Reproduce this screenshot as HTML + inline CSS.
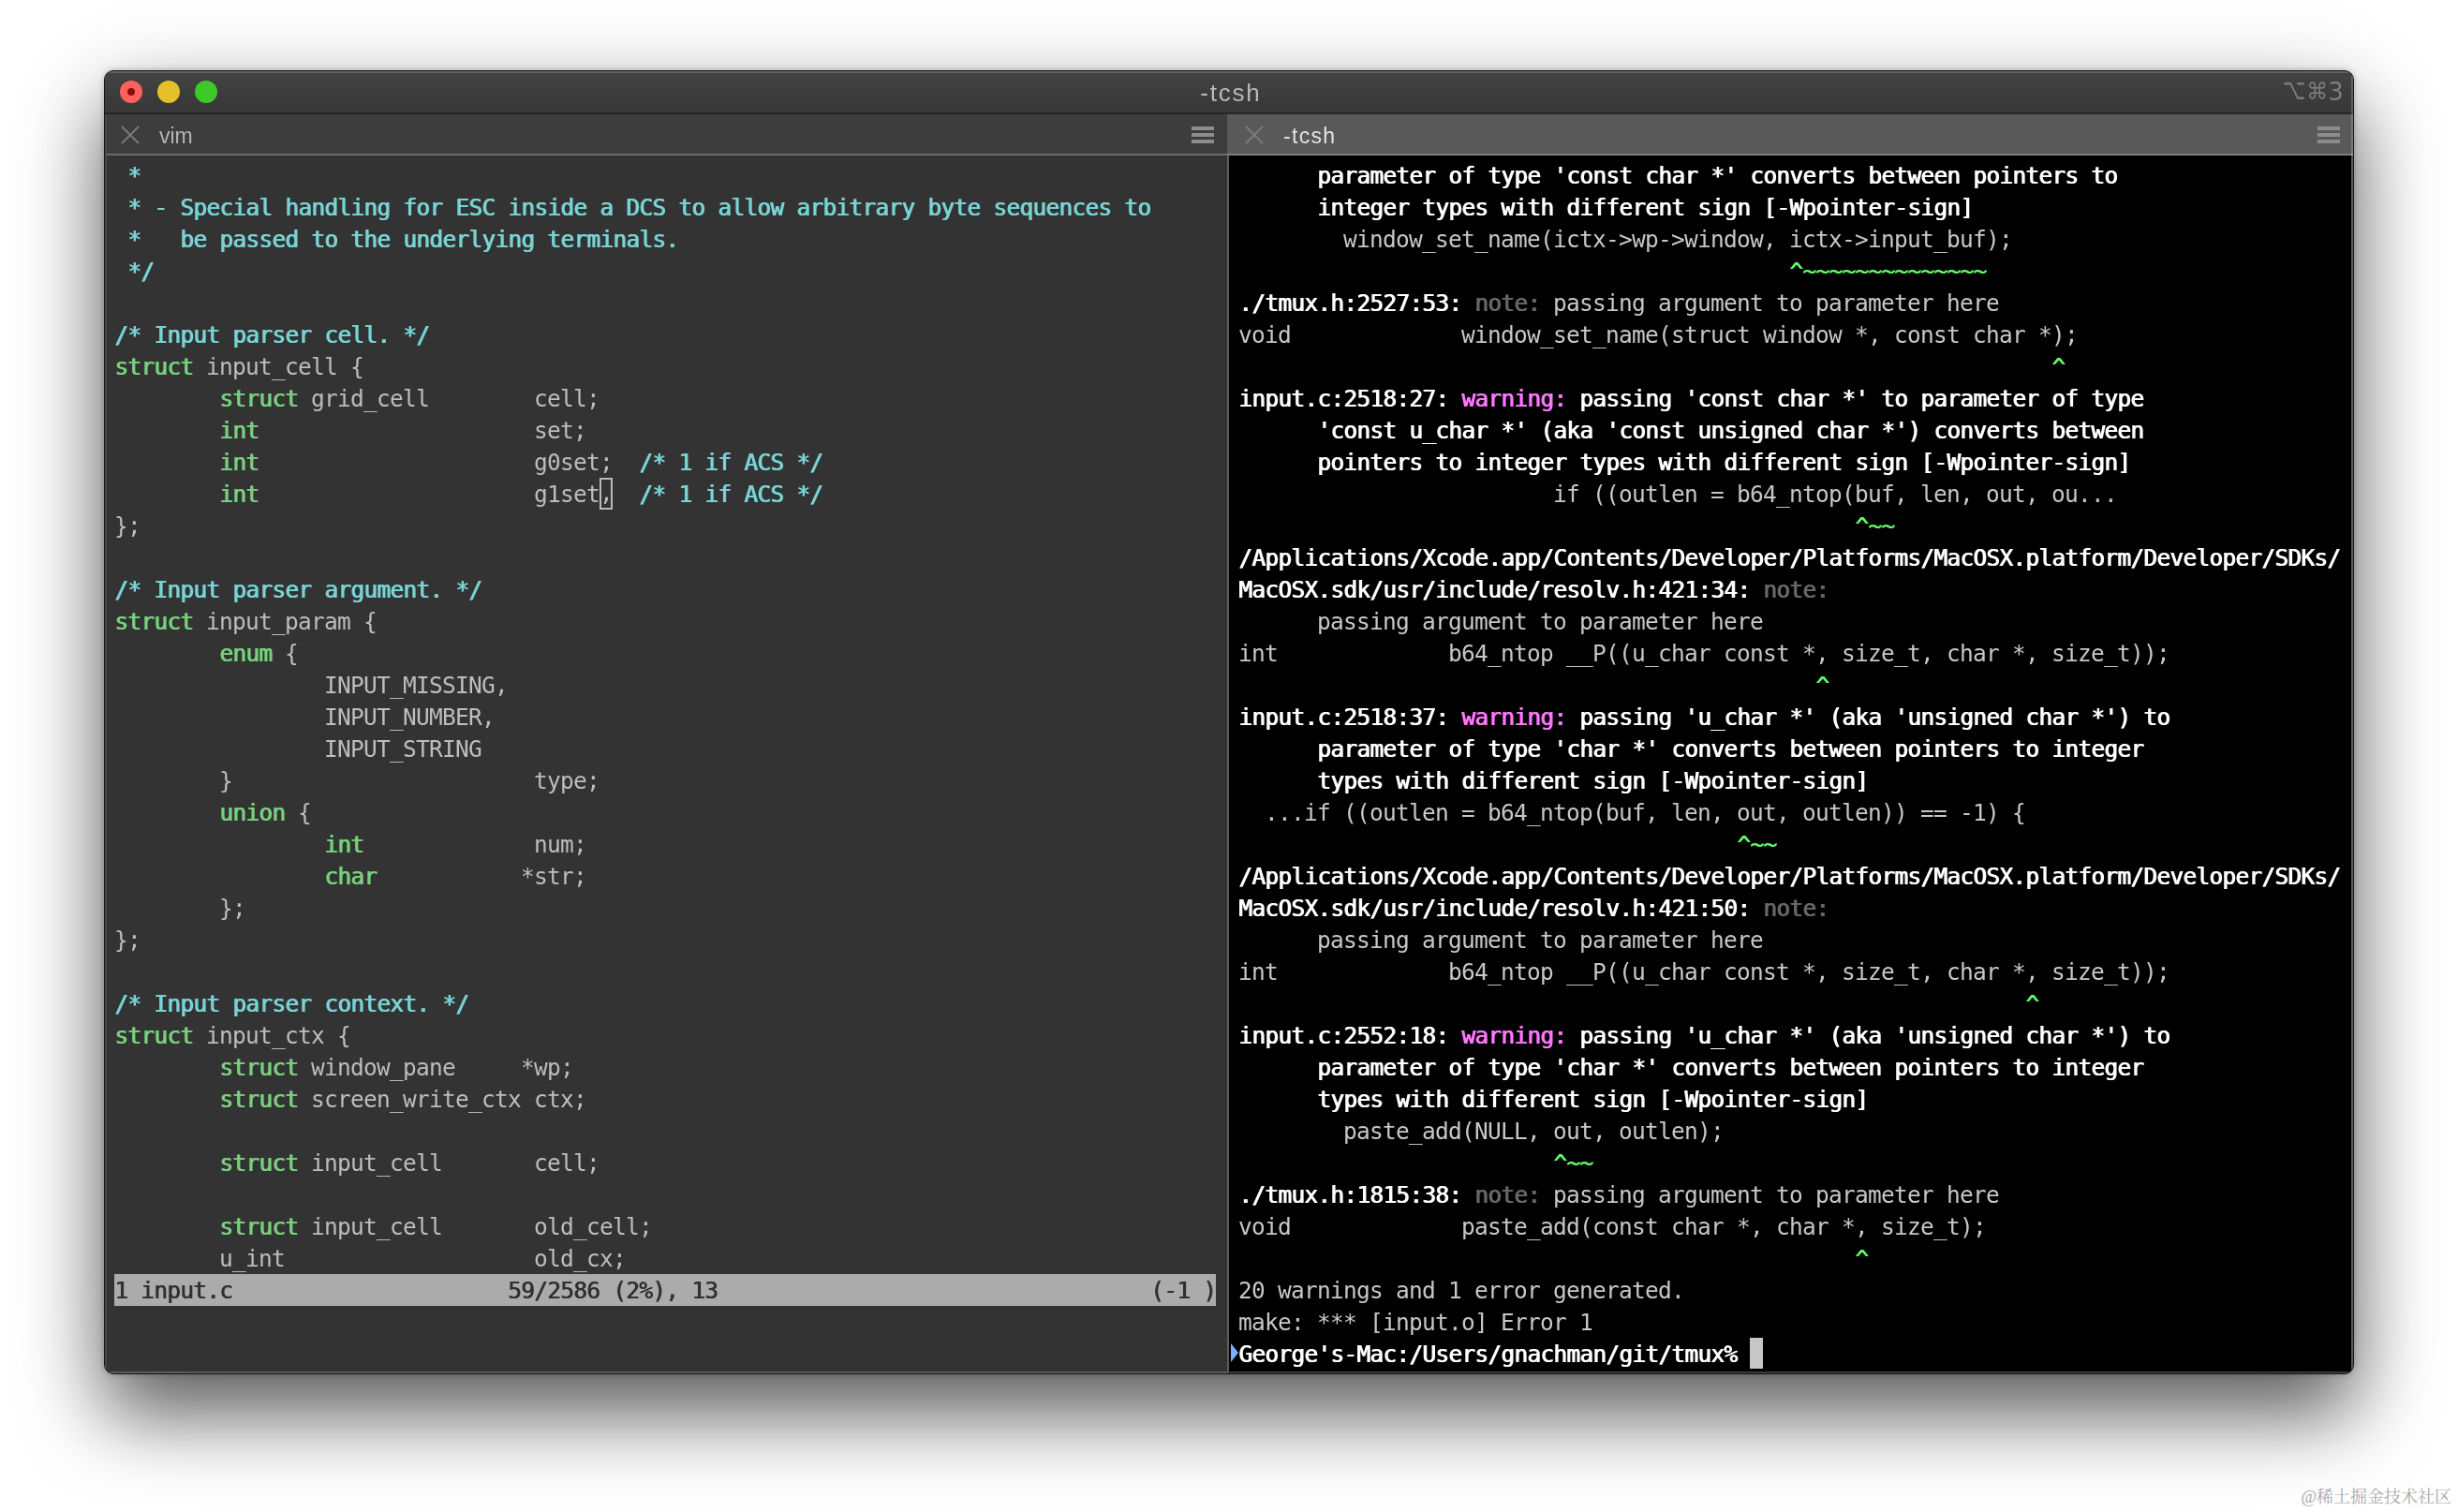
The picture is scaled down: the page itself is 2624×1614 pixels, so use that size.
<!DOCTYPE html>
<html lang="en">
<head>
<meta charset="utf-8">
<title>iTerm2 - tcsh</title>
<style>
html,body{margin:0;padding:0;}
body{width:2624px;height:1614px;background:#fff;overflow:hidden;position:relative;font-family:"Liberation Sans","DejaVu Sans",sans-serif;}
.shadow{position:absolute;left:111px;top:75px;width:2402px;height:1392px;border-radius:10px;
  box-shadow:0 44px 84px rgba(0,0,0,.6),0 10px 110px rgba(0,0,0,.1),0 0 6px rgba(0,0,0,.25);}
.win{position:absolute;left:111px;top:75px;width:2402px;height:1392px;border-radius:10px;overflow:hidden;
  box-sizing:border-box;border:1px solid #151515;background:#333;}
.titlebar{position:absolute;left:0;top:0;width:2400px;height:44px;
  background:linear-gradient(#434343,#373737);box-shadow:inset 0 2px 0 #5e5e5e;}
.title{position:absolute;left:1px;width:2400px;top:0;height:44px;line-height:44px;text-align:center;
  font-size:26px;letter-spacing:1.8px;text-indent:1.8px;color:#b9b9b9;padding-top:1px;}
.tl{position:absolute;top:10px;width:24px;height:24px;border-radius:50%;}
.tl.r{left:16px;background:#fc625d;}
.tl.r i{position:absolute;left:8px;top:8px;width:8px;height:8px;border-radius:50%;background:#8f0a02;}
.tl.y{left:56px;background:#e6c02a;}
.tl.g{left:96px;background:#3fc929;}
.kbd{position:absolute;right:10px;top:0;height:44px;line-height:44px;font-size:26px;color:#7c7c7c;
  font-family:"DejaVu Sans","Liberation Sans",sans-serif;}
.sep1{position:absolute;left:0;top:44px;width:2400px;height:2px;background:#262626;}
.ptab{position:absolute;top:46px;height:42px;}
.ptab.l{left:0;width:1198px;background:#3d3d3d;}
.ptab.rt{left:1198px;width:1202px;background:#595959;}
.ptab .nm{position:absolute;left:58px;top:2px;height:42px;line-height:42px;font-size:23px;}
.ptab.l .nm{color:#b4b4b4;}
.ptab.rt .nm{color:#e2e2e2;left:60px;letter-spacing:1.3px;}
.ptab svg{position:absolute;}
.ham{position:absolute;top:13px;width:24px;height:18px;
  background:linear-gradient(#8c8c8c 0 4px,transparent 4px 7px,#8c8c8c 7px 11px,transparent 11px 14px,#8c8c8c 14px 18px);}
.sep2{position:absolute;top:88px;height:2px;}
.sep2.l{left:0;width:1198px;background:#6b6b6b;}
.sep2.rt{left:1198px;width:1202px;background:#7d7d7d;}
.pane{position:absolute;top:90px;height:1300px;overflow:hidden;
  font-family:"DejaVu Sans Mono", "Liberation Mono", monospace;font-size:24.5px;letter-spacing:-0.7502px;
  font-variant-ligatures:none;font-kerning:none;}
.pane.l{left:0;width:1198px;background:#333;color:#bdbdbd;}
.pane.rt{left:1200px;width:1198px;background:#000;color:#c7c7c7;}
.divider{position:absolute;left:1198px;top:90px;width:2px;height:1300px;background:#5c5c5c;}
.rborder{position:absolute;left:2398px;top:0;width:2px;height:1390px;background:rgba(255,255,255,.2);}
.lborder{position:absolute;left:0;top:46px;width:2px;height:1344px;background:#484848;}
.bborder{position:absolute;left:0;top:1388px;width:2400px;height:2px;background:linear-gradient(90deg,#5c5c5c 0 1199px,#3a3a3a 1199px);}
.lines{position:absolute;left:10px;top:4px;}
.ln{height:34px;line-height:34px;white-space:pre;position:relative;top:1px;}
.c{color:#78d3d4;text-shadow:1px 0 0 #78d3d4;}
.k{color:#77d17c;text-shadow:1px 0 0 #77d17c;}
.b{color:#fff;text-shadow:1px 0 0 #fff;}
.g{color:#5ff967;text-shadow:1px 0 0 #5ff967;}
.w{color:#ff76ff;text-shadow:1px 0 0 #ff76ff;}
.t{color:#676767;text-shadow:1px 0 0 #676767;}
.cur{box-shadow:inset 0 0 0 2px #b9b9b9;display:inline-block;width:14px;height:34px;vertical-align:top;box-sizing:border-box;position:relative;top:-1px;}
.blk{background:#c7c7c7;display:inline-block;width:14px;height:33px;vertical-align:top;position:relative;top:-1px;}
.status{white-space:pre;position:absolute;left:10px;top:1194px;width:1176px;height:34px;line-height:34px;background:#ababab;color:#303030;}
.status span{position:relative;top:1px;text-shadow:.7px 0 0 #303030;}
.mark{position:absolute;left:2px;top:1268px;width:0;height:0;border-left:8px solid #7db1ff;border-top:10.5px solid transparent;border-bottom:10.5px solid transparent;}
.wm{position:absolute;right:7px;top:1586px;font-family:"Liberation Serif","Noto Serif CJK SC",serif;font-size:18px;line-height:24px;color:#a9a9a9;
  text-shadow:0 0 2px #fff;}

.kbd .o{font-size:21px;position:relative;top:-5px;margin-right:1px;display:inline-block;transform:scaleY(1.5);}
.kbd .m{font-size:23px;position:relative;top:-2px;margin-right:0;display:inline-block;transform:scaleY(1.08);}
.lines,.status span,.title,.nm,.kbd{will-change:transform;}

</style>
</head>
<body>
<div class="shadow"></div>
<div class="win">
  <div class="titlebar">
    <div class="tl r"><i></i></div><div class="tl y"></div><div class="tl g"></div>
    <div class="title">-tcsh</div>
    <div class="kbd"><span class="o">⌥</span><span class="m">⌘</span>3</div>
  </div>
  <div class="sep1"></div>
  <div class="ptab l">
    <svg style="left:17px;top:12px" width="20" height="20" viewBox="0 0 20 20"><path d="M1 1 L19 19 M19 1 L1 19" stroke="#7a7a7a" stroke-width="2" fill="none"/></svg>
    <div class="nm">vim</div>
    <div class="ham" style="left:1160px"></div>
  </div>
  <div class="ptab rt">
    <svg style="left:19px;top:12px" width="20" height="20" viewBox="0 0 20 20"><path d="M1 1 L19 19 M19 1 L1 19" stroke="#7b7b7b" stroke-width="2" fill="none"/></svg>
    <div class="nm">-tcsh</div>
    <div class="ham" style="left:1164px"></div>
  </div>
  <div class="sep2 l"></div><div class="sep2 rt"></div>
  <div class="pane l">
    <div class="lines">
<div class="ln"><span class="c"> *</span></div>
<div class="ln"><span class="c"> * - Special handling for ESC inside a DCS to allow arbitrary byte sequences to</span></div>
<div class="ln"><span class="c"> *   be passed to the underlying terminals.</span></div>
<div class="ln"><span class="c"> */</span></div>
<div class="ln"> </div>
<div class="ln"><span class="c">/* Input parser cell. */</span></div>
<div class="ln"><span class="k">struct</span> input_cell {</div>
<div class="ln">        <span class="k">struct</span> grid_cell        cell;</div>
<div class="ln">        <span class="k">int</span>                     set;</div>
<div class="ln">        <span class="k">int</span>                     g0set;  <span class="c">/* 1 if ACS */</span></div>
<div class="ln">        <span class="k">int</span>                     g1set<span class="cur">,</span>  <span class="c">/* 1 if ACS */</span></div>
<div class="ln">};</div>
<div class="ln"> </div>
<div class="ln"><span class="c">/* Input parser argument. */</span></div>
<div class="ln"><span class="k">struct</span> input_param {</div>
<div class="ln">        <span class="k">enum</span> {</div>
<div class="ln">                INPUT_MISSING,</div>
<div class="ln">                INPUT_NUMBER,</div>
<div class="ln">                INPUT_STRING</div>
<div class="ln">        }                       type;</div>
<div class="ln">        <span class="k">union</span> {</div>
<div class="ln">                <span class="k">int</span>             num;</div>
<div class="ln">                <span class="k">char</span>           *str;</div>
<div class="ln">        };</div>
<div class="ln">};</div>
<div class="ln"> </div>
<div class="ln"><span class="c">/* Input parser context. */</span></div>
<div class="ln"><span class="k">struct</span> input_ctx {</div>
<div class="ln">        <span class="k">struct</span> window_pane     *wp;</div>
<div class="ln">        <span class="k">struct</span> screen_write_ctx ctx;</div>
<div class="ln"> </div>
<div class="ln">        <span class="k">struct</span> input_cell       cell;</div>
<div class="ln"> </div>
<div class="ln">        <span class="k">struct</span> input_cell       old_cell;</div>
<div class="ln">        u_int                   old_cx;</div>
    </div>
    <div class="status"><span>1 input.c                     59/2586 (2%), 13                                 (-1 )</span></div>
  </div>
  <div class="divider"></div>
  <div class="pane rt">
    <div class="mark"></div>
    <div class="lines">
<div class="ln"><span class="b">      parameter of type 'const char *' converts between pointers to</span></div>
<div class="ln"><span class="b">      integer types with different sign [-Wpointer-sign]</span></div>
<div class="ln">        window_set_name(ictx-&gt;wp-&gt;window, ictx-&gt;input_buf);</div>
<div class="ln"><span class="g">                                          ^~~~~~~~~~~~~~~</span></div>
<div class="ln"><span class="b">./tmux.h:2527:53: </span><span class="t">note: </span>passing argument to parameter here</div>
<div class="ln">void             window_set_name(struct window *, const char *);</div>
<div class="ln"><span class="g">                                                              ^</span></div>
<div class="ln"><span class="b">input.c:2518:27: </span><span class="w">warning: </span><span class="b">passing 'const char *' to parameter of type</span></div>
<div class="ln"><span class="b">      'const u_char *' (aka 'const unsigned char *') converts between</span></div>
<div class="ln"><span class="b">      pointers to integer types with different sign [-Wpointer-sign]</span></div>
<div class="ln">                        if ((outlen = b64_ntop(buf, len, out, ou...</div>
<div class="ln"><span class="g">                                               ^~~</span></div>
<div class="ln"><span class="b">/Applications/Xcode.app/Contents/Developer/Platforms/MacOSX.platform/Developer/SDKs/</span></div>
<div class="ln"><span class="b">MacOSX.sdk/usr/include/resolv.h:421:34: </span><span class="t">note:</span></div>
<div class="ln">      passing argument to parameter here</div>
<div class="ln">int             b64_ntop __P((u_char const *, size_t, char *, size_t));</div>
<div class="ln"><span class="g">                                            ^</span></div>
<div class="ln"><span class="b">input.c:2518:37: </span><span class="w">warning: </span><span class="b">passing 'u_char *' (aka 'unsigned char *') to</span></div>
<div class="ln"><span class="b">      parameter of type 'char *' converts between pointers to integer</span></div>
<div class="ln"><span class="b">      types with different sign [-Wpointer-sign]</span></div>
<div class="ln">  ...if ((outlen = b64_ntop(buf, len, out, outlen)) == -1) {</div>
<div class="ln"><span class="g">                                      ^~~</span></div>
<div class="ln"><span class="b">/Applications/Xcode.app/Contents/Developer/Platforms/MacOSX.platform/Developer/SDKs/</span></div>
<div class="ln"><span class="b">MacOSX.sdk/usr/include/resolv.h:421:50: </span><span class="t">note:</span></div>
<div class="ln">      passing argument to parameter here</div>
<div class="ln">int             b64_ntop __P((u_char const *, size_t, char *, size_t));</div>
<div class="ln"><span class="g">                                                            ^</span></div>
<div class="ln"><span class="b">input.c:2552:18: </span><span class="w">warning: </span><span class="b">passing 'u_char *' (aka 'unsigned char *') to</span></div>
<div class="ln"><span class="b">      parameter of type 'char *' converts between pointers to integer</span></div>
<div class="ln"><span class="b">      types with different sign [-Wpointer-sign]</span></div>
<div class="ln">        paste_add(NULL, out, outlen);</div>
<div class="ln"><span class="g">                        ^~~</span></div>
<div class="ln"><span class="b">./tmux.h:1815:38: </span><span class="t">note: </span>passing argument to parameter here</div>
<div class="ln">void             paste_add(const char *, char *, size_t);</div>
<div class="ln"><span class="g">                                               ^</span></div>
<div class="ln">20 warnings and 1 error generated.</div>
<div class="ln">make: *** [input.o] Error 1</div>
<div class="ln"><span class="b">George's-Mac:/Users/gnachman/git/tmux% </span><span class="blk"> </span></div>
    </div>
  </div>
  <div class="rborder"></div><div class="lborder"></div>
  <div class="bborder"></div>
</div>
<div class="wm">@稀土掘金技术社区</div>

</body>
</html>
